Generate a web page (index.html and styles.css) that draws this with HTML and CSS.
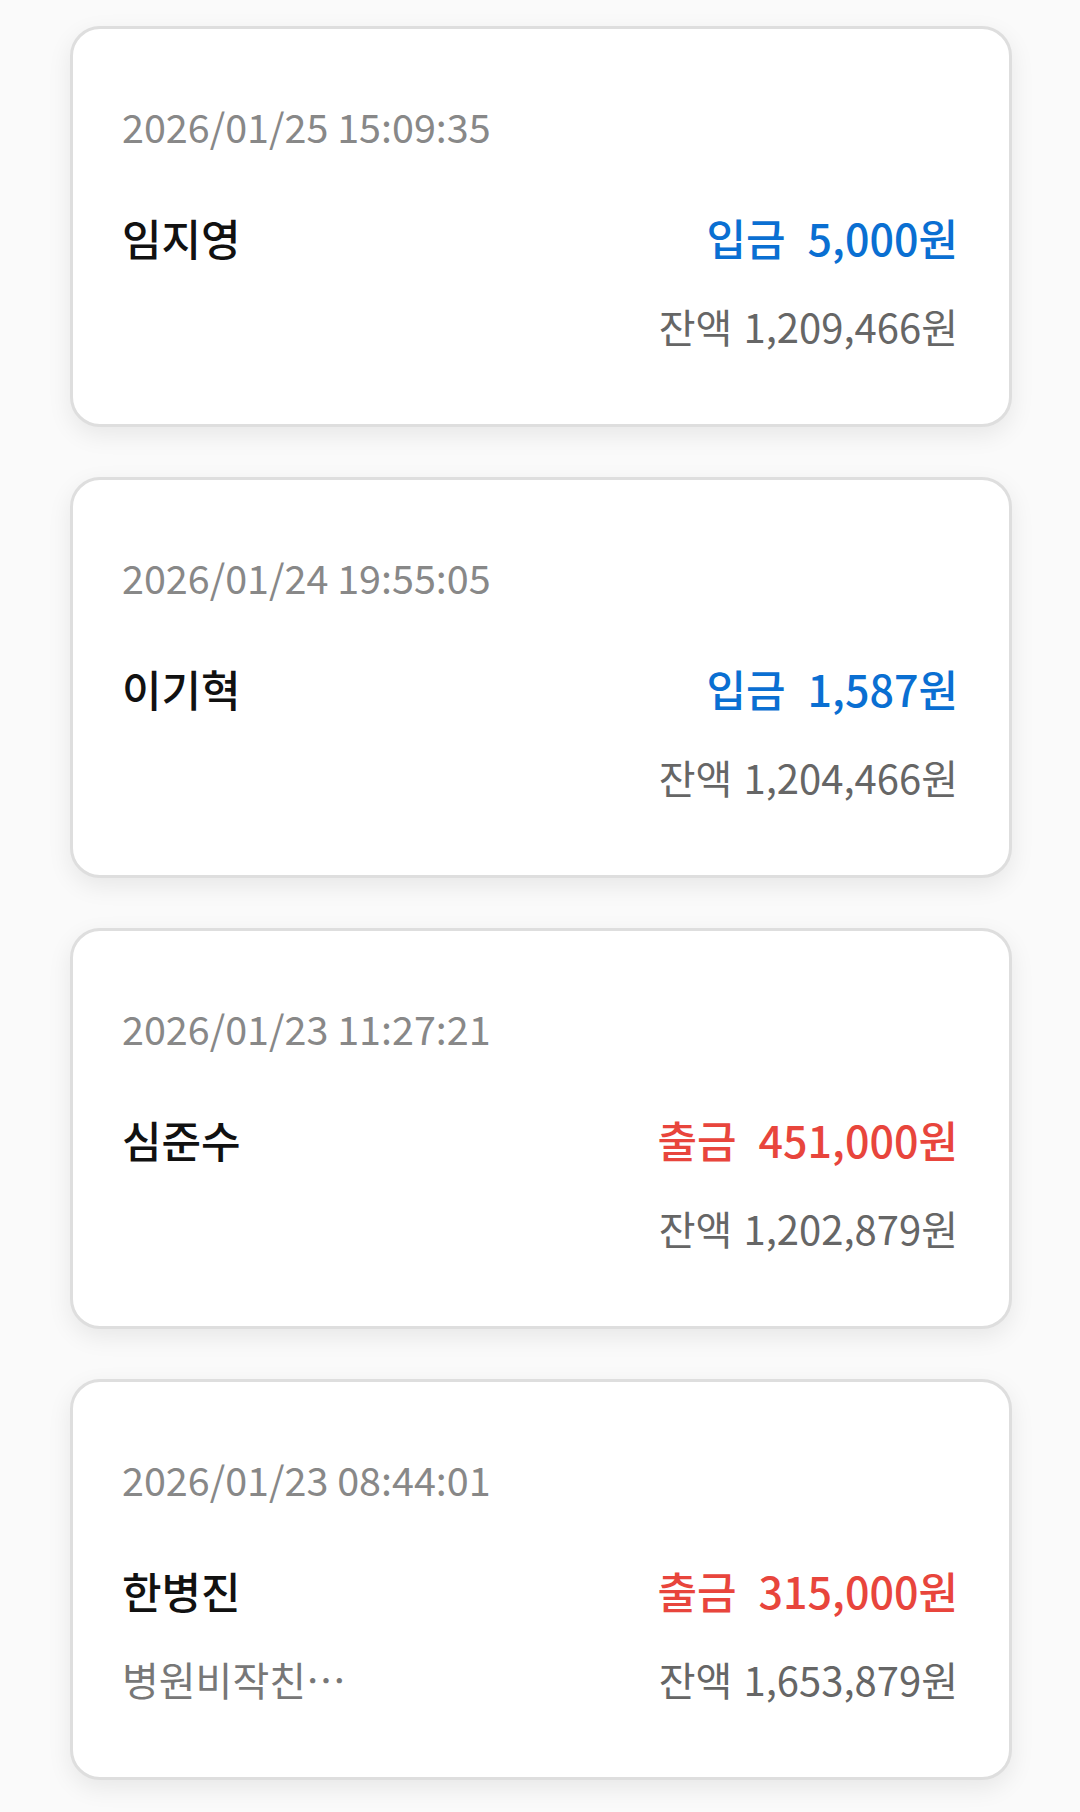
FILE: index.html
```html
<!DOCTYPE html>
<html lang="ko">
<head>
    <meta charset="UTF-8">
    <meta name="viewport" content="width=device-width, initial-scale=1.0">
    <title>거래내역</title>
    <link rel="stylesheet" href="styles.css">
</head>
<body>
    <div class="history-list">
        <div class="history-card">
            <div class="history-date" lang="en">2026/01/25 15:09:35</div>
            <div class="history-row">
                <div class="history-name">임지영</div>
                <div class="history-amount deposit"><span class="type">입금</span>5,000원</div>
            </div>
            <div class="history-row">
                <div class="history-memo"></div>
                <div class="history-balance">잔액 1,209,466원</div>
            </div>
        </div>

        <div class="history-card">
            <div class="history-date" lang="en">2026/01/24 19:55:05</div>
            <div class="history-row">
                <div class="history-name">이기혁</div>
                <div class="history-amount deposit"><span class="type">입금</span>1,587원</div>
            </div>
            <div class="history-row">
                <div class="history-memo"></div>
                <div class="history-balance">잔액 1,204,466원</div>
            </div>
        </div>

        <div class="history-card">
            <div class="history-date" lang="en">2026/01/23 11:27:21</div>
            <div class="history-row">
                <div class="history-name">심준수</div>
                <div class="history-amount withdraw"><span class="type">출금</span>451,000원</div>
            </div>
            <div class="history-row">
                <div class="history-memo"></div>
                <div class="history-balance">잔액 1,202,879원</div>
            </div>
        </div>

        <div class="history-card">
            <div class="history-date" lang="en">2026/01/23 08:44:01</div>
            <div class="history-row">
                <div class="history-name">한병진</div>
                <div class="history-amount withdraw"><span class="type">출금</span>315,000원</div>
            </div>
            <div class="history-row">
                <div class="history-memo">병원비작친…</div>
                <div class="history-balance">잔액 1,653,879원</div>
            </div>
        </div>
    </div>
</body>
</html>
```

FILE: styles.css
```css
body {
    margin: 0;
    background-color: #fafafa;
    font-family: "Noto Sans CJK KR", "Noto Sans", sans-serif;
}
.history-list {
    display: flex;
    flex-direction: column;
    gap: 50px;
    padding: 26px 68px 40px 70px;
}
.history-card {
    box-sizing: border-box;
    height: 401px;
    padding: 69px 51px 0 49px;
    background-color: #fff;
    border: 3px solid #dedede;
    border-radius: 30px;
    box-shadow: 0px 8px 24px rgba(0, 0, 0, 0.08);
}
.history-date {
    height: 56px;
    line-height: 56px;
    font-size: 39.5px;
    color: #888;
}
.history-row {
    display: flex;
    justify-content: space-between;
    align-items: center;
    height: 56px;
    line-height: 56px;
    margin-top: 55px;
}
.history-row + .history-row {
    margin-top: 33px;
}
.history-name {
    font-size: 43px;
    font-weight: 500;
    color: #111;
}
.history-amount {
    font-size: 43px;
    font-weight: 500;
}
.history-amount .type {
    margin-right: 22px;
}
.deposit {
    color: #0a6fd2;
}
.withdraw {
    color: #e8453c;
}
.history-memo, .history-balance {
    font-size: 40px;
    color: #666;
}
.history-memo {
    color: #777;
}
```
